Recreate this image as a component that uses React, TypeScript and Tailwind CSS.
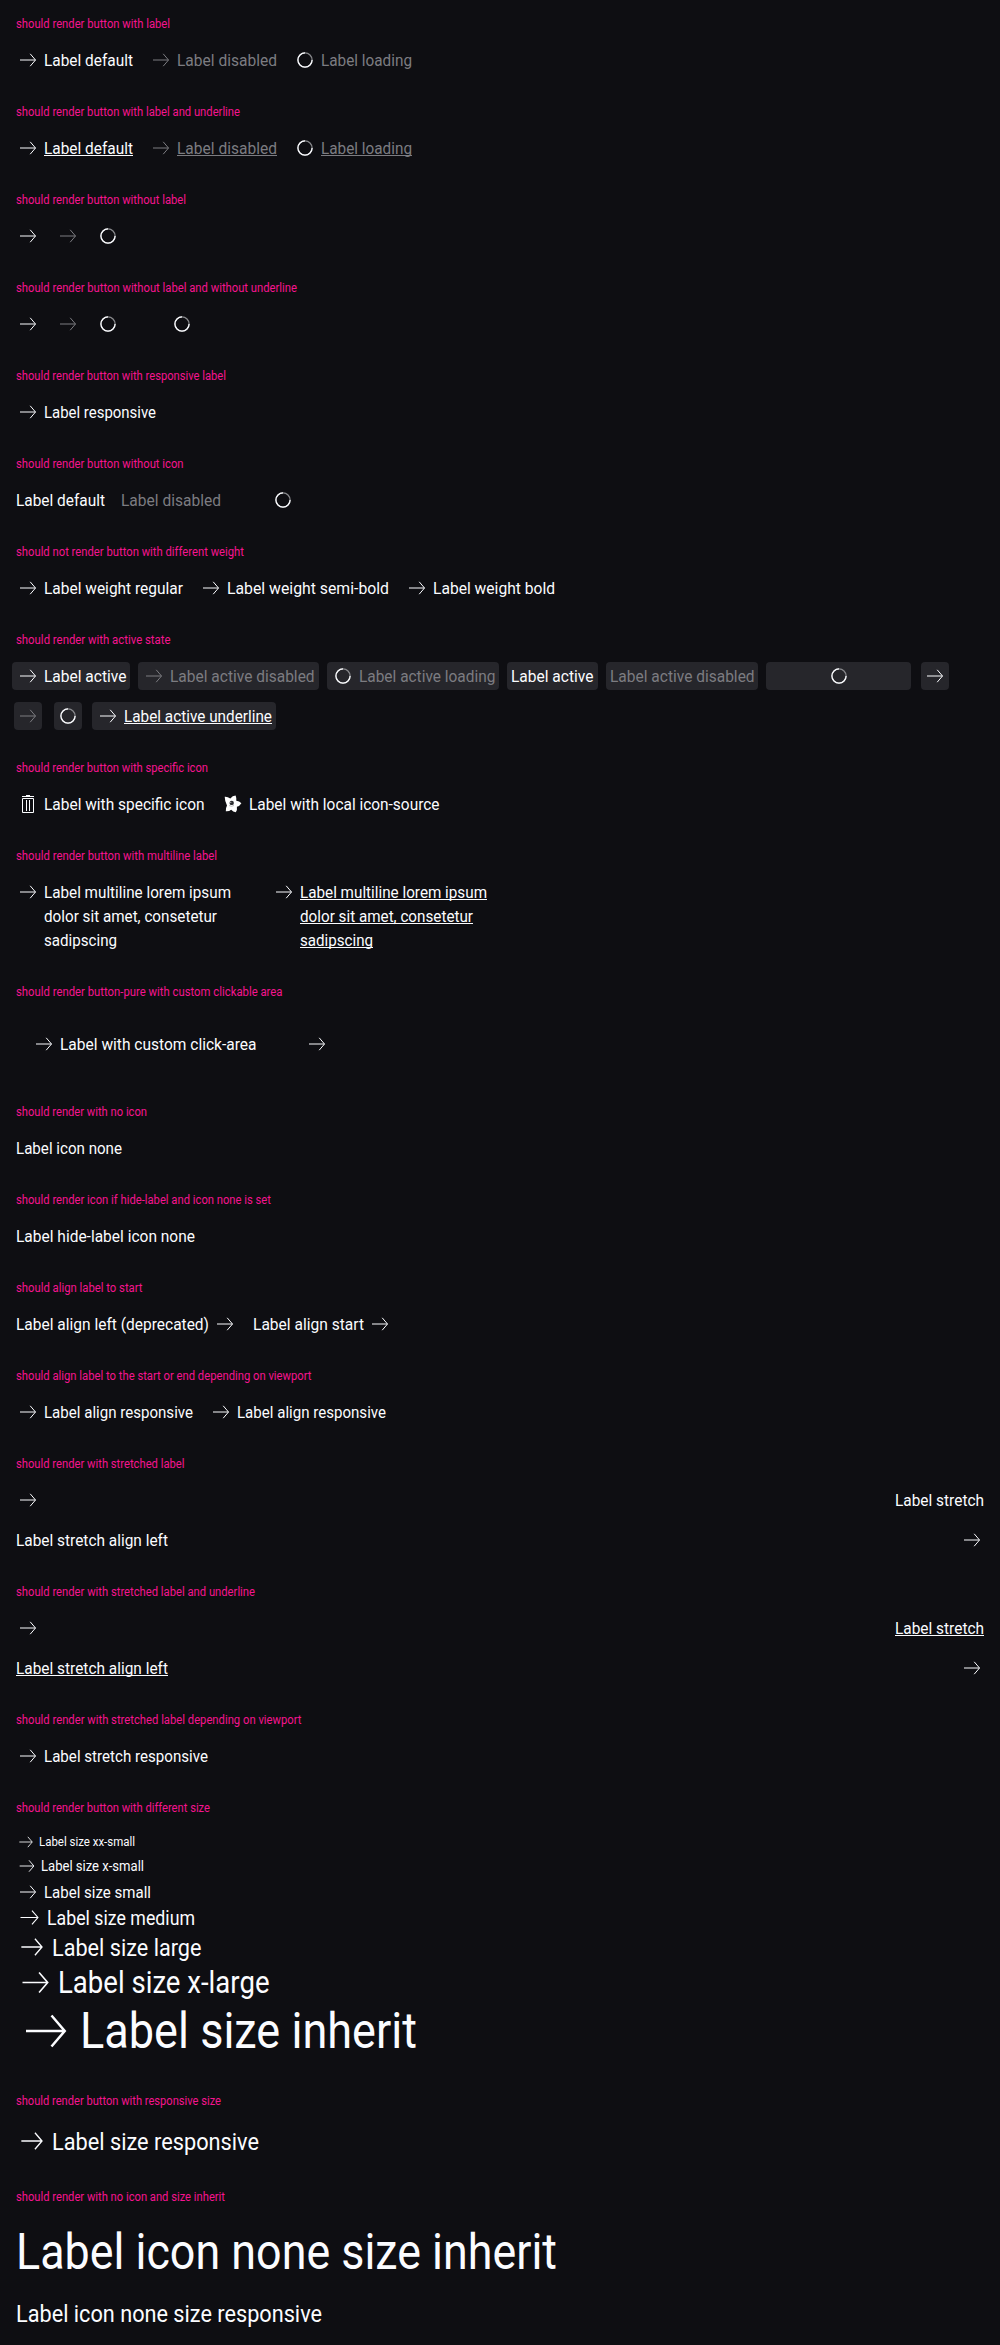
import { useLayoutEffect, useRef, type ReactNode } from 'react';

/** Single line of text, condensed so that it fills the width given by its class. */
function Fit({ w, children, className = 'translate-y-px' }: { w: string; children: string; className?: string }) {
  const outer = useRef<HTMLSpanElement>(null);
  const inner = useRef<HTMLSpanElement>(null);
  useLayoutEffect(() => {
    if (!outer.current || !inner.current) return;
    inner.current.style.transform = 'none';
    const target = outer.current.getBoundingClientRect().width;
    const natural = inner.current.getBoundingClientRect().width;
    inner.current.style.transform = `scaleX(${target / natural})`;
  }, [children, w]);
  return (
    <span ref={outer} className={`flex shrink-0 ${w}`}>
      <span ref={inner} className={`shrink-0 origin-left whitespace-nowrap ${className}`}>
        {children}
      </span>
    </span>
  );
}

const underlined = 'translate-y-px underline decoration-1 underline-offset-1 [text-decoration-skip-ink:none]';

function Arrow({ size = 'size-6' }: { size?: string }) {
  return (
    <svg viewBox="0 0 24 24" fill="none" stroke="currentColor" className={`block shrink-0 ${size}`}>
      <path d="M4 12H19.4M14.2 5.8L19.5 12L14.2 18.2" />
    </svg>
  );
}

function Spinner() {
  return (
    <svg viewBox="0 0 24 24" fill="none" strokeWidth="1.25" className="block size-6 shrink-0">
      <circle cx="12" cy="12" r="7.1" stroke="#88898c" />
      <path d="M12 4.900A7.100 7.100 0 1 0 19.100 12" stroke="#fbfcff" />
    </svg>
  );
}

function Trash() {
  return (
    <svg viewBox="0 0 24 24" fill="none" stroke="currentColor" className="block size-6 shrink-0">
      <path d="M6 4.500H18M10 3.500H14M6.500 6.500V20.500H17.500V6.500ZM10.500 8V19M13.500 8V19" />
    </svg>
  );
}

function Flower() {
  return (
    <svg viewBox="0 0 24 24" className="block size-6 shrink-0">
      <path
        d="M3.700 4.800Q6.500 4.500 9.300 6.500Q11.500 3.800 14.600 3.600Q15.600 6 15.300 8.700Q18.500 8.800 20.400 11.200Q18.800 14 15.900 14.700Q16.500 17.600 14.800 20.200Q12 20 10.200 17.700Q7.800 19.600 4.800 19.200Q4.600 16 6 13.400Q3.800 9.500 3.700 4.800Z"
        fill="#fff"
      />
      <circle cx="10.700" cy="10.900" r="2.200" fill="#2c2d31" />
      <circle cx="9.800" cy="10.300" r="0.600" fill="#c9c9cc" />
      <path d="M8 13.500Q10.500 15 13 13.500" fill="none" stroke="#9a9a9d" strokeWidth="0.600" />
    </svg>
  );
}

type ButtonProps = {
  w?: string;
  label?: string;
  icon?: ReactNode;
  disabled?: boolean;
  loading?: boolean;
  underline?: boolean;
  active?: boolean;
  start?: boolean;
  stretch?: boolean;
};

function Button({ w = '', label, icon, disabled, loading, underline, active, start, stretch }: ButtonProps) {
  const glyph = icon === undefined ? loading ? <Spinner /> : <Arrow /> : icon;
  const muted = disabled || loading;
  const pad = active ? (label ? '-mx-1 -my-0.5 rounded px-1 py-0.5 bg-[#26262b]' : '-m-0.5 rounded p-0.5 bg-[#26262b]') : '';
  return (
    <button
      className={`flex items-start gap-1 text-left ${pad} ${muted ? 'text-[#7c7c81]' : ''} ${start ? 'flex-row-reverse' : ''} ${
        stretch ? 'w-full justify-between' : ''
      }`}
    >
      {glyph}
      {label && (
        <Fit w={w} className={underline ? underlined : undefined}>
          {label}
        </Fit>
      )}
    </button>
  );
}

/** Loading button without an icon slot: the spinner sits in the middle of the hidden label. */
function LoadingBlock({ w, active }: { w: string; active?: boolean }) {
  return (
    <button className={active ? '-mx-1 -my-0.5 rounded bg-[#26262b] px-1 py-0.5' : ''}>
      <span className={`flex justify-center ${w}`}>
        <Spinner />
      </span>
    </button>
  );
}

function Section({ title, w, children, body = 'flex flex-wrap gap-4' }: { title: string; w: string; children: ReactNode; body?: string }) {
  return (
    <section className="flex flex-col gap-4 p-4">
      <h3 className="h-4 text-[12.5px] leading-4 text-[#f5148f]">
        <Fit w={w} className="">{title}</Fit>
      </h3>
      <div className={body}>{children}</div>
    </section>
  );
}

function Multiline({ underline }: { underline?: boolean }) {
  const cls = underline ? underlined : undefined;
  return (
    <button className="flex w-[240px] items-start gap-1 text-left">
      <Arrow />
      <span>
        <Fit w="w-[187px]" className={cls}>Label multiline lorem ipsum</Fit>
        <Fit w="w-[173px]" className={cls}>dolor sit amet, consetetur</Fit>
        <Fit w="w-[73px]" className={cls}>sadipscing</Fit>
      </span>
    </button>
  );
}

const sizes = [
  { row: 'h-[19px] text-[12.3px]', icon: 'size-5 -mr-px', w: 'w-[96px]', label: 'Label size xx-small' },
  { row: 'h-[30px] text-[14.4px]', icon: 'size-[22px] -mr-px', w: 'w-[103px]', label: 'Label size x-small' },
  { row: 'h-[22px] text-[16.5px]', icon: 'size-6', w: 'w-[107px]', label: 'Label size small' },
  { row: 'h-[29px] text-[19.8px]', icon: 'size-[27px]', w: 'w-[148px]', label: 'Label size medium' },
  { row: 'h-[30px] text-[24px]', icon: 'size-8', w: 'w-[149.5px]', label: 'Label size large' },
  { row: 'h-[40px] text-[30.5px]', icon: 'size-[39px] -mr-px', w: 'w-[211.5px]', label: 'Label size x-large' },
  { row: 'h-[58px] text-[49.4px]', icon: 'size-[60px]', w: 'w-[337px]', label: 'Label size inherit' },
];

export default function App() {
  return (
    <main className="h-[2345px] w-[1000px] overflow-hidden bg-[#0e0e12] font-['Roboto',sans-serif] text-[16.5px] leading-6 text-[#fbfcff]">
      <Section title="should render button with label" w="w-[154px]">
        <Button w="w-[89px]" label="Label default" />
        <Button w="w-[100px]" label="Label disabled" disabled />
        <Button w="w-[91px]" label="Label loading" loading />
      </Section>
      <Section title="should render button with label and underline" w="w-[224px]">
        <Button w="w-[89px]" label="Label default" underline />
        <Button w="w-[100px]" label="Label disabled" disabled underline />
        <Button w="w-[91px]" label="Label loading" loading underline />
      </Section>
      <Section title="should render button without label" w="w-[170px]">
        <Button />
        <Button disabled />
        <Button loading />
      </Section>
      <Section title="should render button without label and without underline" w="w-[281px]">
        <Button />
        <Button disabled />
        <Button loading />
        <LoadingBlock w="w-[91px]" />
      </Section>
      <Section title="should render button with responsive label" w="w-[210px]">
        <Button w="w-[112px]" label="Label responsive" />
      </Section>
      <Section title="should render button without icon" w="w-[167.5px]">
        <Button w="w-[89px]" label="Label default" icon={null} />
        <Button w="w-[100px]" label="Label disabled" icon={null} disabled />
        <LoadingBlock w="w-[91px]" />
      </Section>
      <Section title="should not render button with different weight" w="w-[228px]">
        <Button w="w-[139px]" label="Label weight regular" />
        <Button w="w-[162px]" label="Label weight semi-bold" />
        <Button w="w-[122px]" label="Label weight bold" />
      </Section>
      <Section title="should render with active state" w="w-[154.5px]">
        <Button w="w-[82.4px]" label="Label active" active />
        <Button w="w-[144.6px]" label="Label active disabled" active disabled />
        <Button w="w-[136.4px]" label="Label active loading" active loading />
        <Button w="w-[82.4px]" label="Label active" icon={null} active />
        <Button w="w-[144.6px]" label="Label active disabled" icon={null} active disabled />
        <LoadingBlock w="w-[136.4px]" active />
        <Button active />
        <Button active disabled />
        <Button active loading />
        <Button w="w-[148px]" label="Label active underline" active underline />
      </Section>
      <Section title="should render button with specific icon" w="w-[192px]">
        <Button w="w-[160.5px]" label="Label with specific icon" icon={<Trash />} />
        <Button w="w-[190.5px]" label="Label with local icon-source" icon={<Flower />} />
      </Section>
      <Section title="should render button with multiline label" w="w-[201px]">
        <Multiline />
        <Multiline underline />
      </Section>
      <Section title="should render button-pure with custom clickable area" w="w-[266.5px]" body="flex">
        <div className="p-4">
          <Button w="w-[196.5px]" label="Label with custom click-area" />
        </div>
        <div className="ml-4 p-4">
          <Button />
        </div>
      </Section>
      <Section title="should render with no icon" w="w-[131px]">
        <Button w="w-[106px]" label="Label icon none" icon={null} />
      </Section>
      <Section title="should render icon if hide-label and icon none is set" w="w-[255px]">
        <Button w="w-[179px]" label="Label hide-label icon none" icon={null} />
      </Section>
      <Section title="should align label to start" w="w-[126.5px]">
        <Button w="w-[193px]" label="Label align left (deprecated)" start />
        <Button w="w-[111px]" label="Label align start" start />
      </Section>
      <Section title="should align label to the start or end depending on viewport" w="w-[295.5px]">
        <Button w="w-[149px]" label="Label align responsive" />
        <Button w="w-[149px]" label="Label align responsive" />
      </Section>
      <Section title="should render with stretched label" w="w-[168.5px]">
        <Button w="w-[89px]" label="Label stretch" stretch />
        <Button w="w-[152px]" label="Label stretch align left" stretch start />
      </Section>
      <Section title="should render with stretched label and underline" w="w-[239px]">
        <Button w="w-[89px]" label="Label stretch" stretch underline />
        <Button w="w-[152px]" label="Label stretch align left" stretch start underline />
      </Section>
      <Section title="should render with stretched label depending on viewport" w="w-[285.5px]">
        <Button w="w-[164px]" label="Label stretch responsive" />
      </Section>
      <Section title="should render button with different size" w="w-[194px]" body="flex h-[229px] flex-col">
        {sizes.map((s) => (
          <button key={s.label} className={`flex shrink-0 items-center gap-1 text-left leading-none ${s.row}`}>
            <Arrow size={s.icon} />
            <Fit w={s.w}>{s.label}</Fit>
          </button>
        ))}
      </Section>
      <Section title="should render button with responsive size" w="w-[205px]" body="flex">
        <button className="flex h-8 items-center gap-1 text-[24px] leading-8">
          <Arrow size="size-8" />
          <Fit w="w-[207px]">Label size responsive</Fit>
        </button>
      </Section>
      <Section title="should render with no icon and size inherit" w="w-[209px]" body="flex flex-col items-start gap-4">
        <button className="text-left text-[49.4px] leading-[60px]">
          <Fit w="w-[541px]">Label icon none size inherit</Fit>
        </button>
        <button className="text-left text-[24px] leading-8">
          <Fit w="w-[306px]">Label icon none size responsive</Fit>
        </button>
      </Section>
    </main>
  );
}
